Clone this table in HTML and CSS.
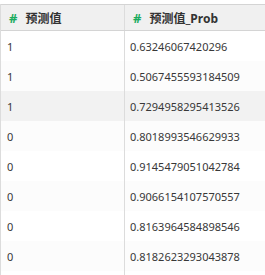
FILE: index.html
```html
<!DOCTYPE html>
<html>
<head>
<meta charset="utf-8">
<link rel="stylesheet" href="styles.css">
</head>
<body>
<div class="grid">
  <div class="row head">
    <div class="cell c1"><span class="hash">#</span><span class="title">预测值</span></div>
    <div class="cell c2"><span class="hash">#</span><span class="title">预测值_Prob</span></div>
  </div>
  <div class="row"><div class="cell c1">1</div><div class="cell c2">0.63246067420296</div></div>
  <div class="row alt"><div class="cell c1">1</div><div class="cell c2">0.5067455593184509</div></div>
  <div class="row hover"><div class="cell c1">1</div><div class="cell c2">0.7294958295413526</div></div>
  <div class="row alt"><div class="cell c1">0</div><div class="cell c2">0.8018993546629933</div></div>
  <div class="row"><div class="cell c1">0</div><div class="cell c2">0.9145479051042784</div></div>
  <div class="row alt"><div class="cell c1">0</div><div class="cell c2">0.9066154107570557</div></div>
  <div class="row"><div class="cell c1">0</div><div class="cell c2">0.8163964584898546</div></div>
  <div class="row alt"><div class="cell c1">0</div><div class="cell c2">0.8182623293043878</div></div>
  <div class="row tail"><div class="cell c1"></div><div class="cell c2"></div></div>
</div>
</body>
</html>
```
FILE: styles.css
```css
html, body {
  margin: 0;
  padding: 0;
  background: #ffffff;
  overflow: hidden;
}
body {
  padding-top: 4px;
  font-family: "Noto Sans", "Noto Sans CJK SC", sans-serif;
  font-size: 11px;
  color: #383838;
}
.grid {
  border-left: 1px solid #dcdcdc;
}
.row {
  display: flex;
  height: 30px;
  background: #ffffff;
}
.row.alt { background: #fcfcfc; }
.row.hover { background: #f2f2f2; }
.row.tail { height: 10px; }
.row.head {
  height: 25px;
  background: #f0f0f0;
  border-top: 1px solid #d4d4d4;
  border-bottom: 1px solid #d4d4d4;
}
.cell {
  display: flex;
  align-items: center;
  padding-left: 6px;
  box-sizing: border-box;
  white-space: nowrap;
  overflow: hidden;
}
.c1 {
  width: 124px;
  flex: none;
  border-right: 1px solid #dcdcdc;
}
.c2 {
  flex: 1;
  min-width: 0;
  padding-left: 5px;
}
.head .c1 { padding-left: 8px; }
.head .c2 { padding-left: 8px; }
.hash {
  color: #1aab5e;
  font-weight: 700;
  font-size: 13px;
  margin-right: 8px;
}
.title {
  font-weight: 700;
  font-size: 12px;
  color: #333333;
}
```
